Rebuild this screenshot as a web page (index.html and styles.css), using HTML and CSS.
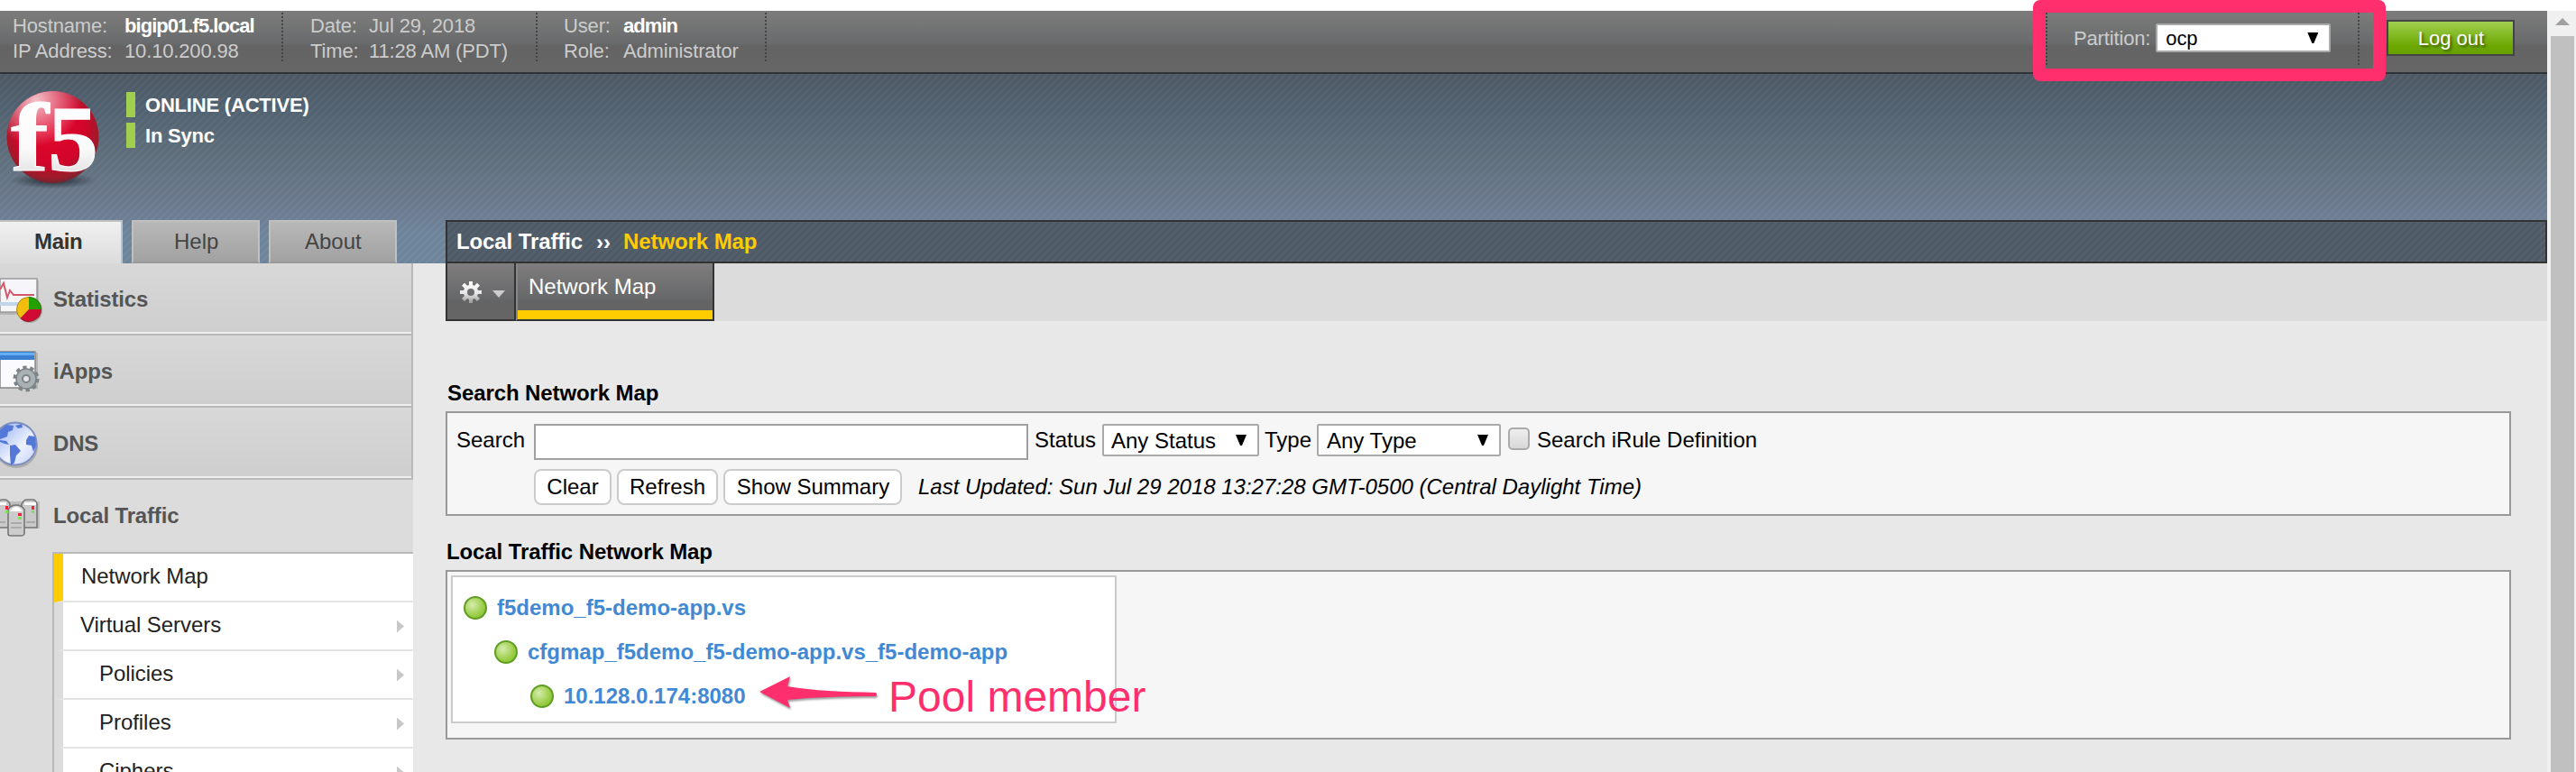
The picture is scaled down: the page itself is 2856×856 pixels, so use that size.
FILE: index.html
```html
<!DOCTYPE html>
<html lang="en">
<head>
<meta charset="utf-8">
<title>Network Map</title>
<link rel="stylesheet" href="styles.css">
</head>
<body>
<div class="screen">
  <div class="page">
    <header class="topbar">
      <dl class="facts facts-host"><dt>Hostname:</dt><dd class="strong">bigip01.f5.local</dd><dt>IP Address:</dt><dd>10.10.200.98</dd></dl>
      <dl class="facts facts-date"><dt>Date:</dt><dd>Jul 29, 2018</dd><dt>Time:</dt><dd>11:28 AM (PDT)</dd></dl>
      <dl class="facts facts-user"><dt>User:</dt><dd class="strong">admin</dd><dt>Role:</dt><dd>Administrator</dd></dl>
      <div class="partition">
        <span>Partition:</span>
        <div class="select select-partition"><span>ocp</span><i class="caret"></i></div>
      </div>
      <div class="logout">Log out</div>
    </header>

    <div class="banner">
      <div class="identity">
        <svg class="logo" viewBox="0 0 112 116" width="112" height="116">
          <defs>
            <radialGradient id="ball" cx="48%" cy="42%" r="62%">
              <stop offset="0" stop-color="#e2062c"/><stop offset=".6" stop-color="#d2052a"/><stop offset=".85" stop-color="#9a1c2b"/><stop offset="1" stop-color="#5c2a30"/>
            </radialGradient>
            <radialGradient id="shine" cx="32%" cy="10%" r="50%">
              <stop offset="0" stop-color="#fff" stop-opacity=".75"/><stop offset="1" stop-color="#fff" stop-opacity="0"/>
            </radialGradient>
            <radialGradient id="shade"><stop offset="0" stop-color="#1c232b" stop-opacity=".9"/><stop offset="1" stop-color="#1c232b" stop-opacity="0"/></radialGradient>
            <linearGradient id="silver" x1="0" y1="0" x2="0" y2="1"><stop offset="0" stop-color="#fff"/><stop offset=".6" stop-color="#fafafa"/><stop offset="1" stop-color="#d4d4d6"/></linearGradient>
          </defs>
          <ellipse cx="59" cy="103" rx="48" ry="9" fill="url(#shade)"/>
          <circle cx="58.500" cy="55" r="51" fill="url(#ball)"/>
          <circle cx="58.500" cy="55" r="51" fill="url(#shine)"/>
          <text class="logo-f" x="12" y="92" textLength="42" lengthAdjust="spacingAndGlyphs">f</text>
          <text class="logo-5" x="53" y="92" textLength="56" lengthAdjust="spacingAndGlyphs">5</text>
        </svg>
        <div class="states"><div class="state">ONLINE (ACTIVE)</div><div class="state">In Sync</div></div>
      </div>
      <div class="banner-foot">
        <nav class="tabs"><div class="tab tab-on">Main</div><div class="tab tab-help">Help</div><div class="tab tab-about">About</div></nav>
        <div class="crumbs"><span>Local Traffic</span><span class="sep">››</span><span class="here">Network Map</span></div>
      </div>
    </div>

    <div class="columns">
      <aside class="sidebar">
        <div class="group">
          <svg class="group-icon" viewBox="0 1 50 76" width="50" height="76">
            <path d="M0 20h43v38H0z" fill="#999" opacity=".5"/><path d="M0 18h41v37H0z" fill="#f6f6fa" stroke="#999" stroke-width="1.500"/>
            <path d="M0 44h40v4H0z" fill="#c3d5ea"/>
            <path d="M0 30l4-7 4 16 3-8 4 5h23" fill="none" stroke="#d4586a" stroke-width="2"/>
            <circle cx="33" cy="53" r="14" fill="#777" opacity=".5"/>
            <path d="M32 52V38a14 14 0 0 0-9.500 24z" fill="#f2bd0c"/><path d="M32 52V38a14 14 0 0 1 14 14z" fill="#23a000"/><path d="M32 52h14a14 14 0 0 1-23.500 10z" fill="#d00a33"/>
            <circle cx="32" cy="52" r="13.500" fill="none" stroke="#3b3b1c" stroke-opacity=".4"/>
          </svg>
          <span>Statistics</span>
        </div>
        <div class="group">
          <svg class="group-icon" viewBox="0 1 50 76" width="50" height="76">
            <path d="M0 20h42v40H0z" fill="#999" opacity=".5"/><path d="M0 19h39v40H0z" fill="#fbfaff" stroke="#888" stroke-width="1.500"/>
            <path d="M0 19h38v9H0z" fill="#3c7ed0"/><path d="M0 20h38v3H0z" fill="#64aef5"/>
            <circle cx="29" cy="49" r="12.500" fill="none" stroke="#7c8488" stroke-width="4" stroke-dasharray="4.200 3.650"/>
            <circle cx="29" cy="49" r="11" fill="#a9b1b5" stroke="#7c8488" stroke-width="1.500"/>
            <circle cx="29" cy="49" r="4" fill="#e4e4e8" stroke="#7c8488" stroke-width="2"/>
          </svg>
          <span>iApps</span>
        </div>
        <div class="group">
          <svg class="group-icon" viewBox="0 0 50 76" width="50" height="76">
            <defs><linearGradient id="sea" x1="0" y1="0" x2="1" y2="1"><stop offset="0" stop-color="#8ba7ee"/><stop offset=".6" stop-color="#eef2ff"/><stop offset="1" stop-color="#c3cffa"/></linearGradient></defs>
            <circle cx="18" cy="43" r="24" fill="#777" opacity=".4"/>
            <circle cx="17" cy="40" r="23.500" fill="url(#sea)" stroke="#7d8fc0" stroke-width="2"/>
            <path d="M0 25l7-6 8 1-1 5-5 2-1 5-8 3zM17 20l7-2 1 4-5 1zM0 36l7 1 3 4-5-1-5-2zM11 42l6-1 6 7-5 5-2 8-4 3-1-12zM29 36l3-5 7 1 1 10-3 7-2-7-6-1z" fill="#5478d8"/>
          </svg>
          <span>DNS</span>
        </div>
        <div class="group group-open">
          <svg class="group-icon" viewBox="0 2 50 76" width="50" height="76">
            <path d="M0 26h44v30H0z" fill="#888" opacity=".35"/>
            <path d="M-4 55V29q2-5 7-5h2q4 0 6 5v26zM24 55V29q2-5 6-5h6q4 0 5 5v26z" fill="#c9c9c9" stroke="#777" stroke-width="1.600"/>
            <path d="M9 62V35q3-5 9-5t9 5v27q-1 2-3 2H12q-3 0-3-2z" fill="#ccc" stroke="#777" stroke-width="1.600"/>
            <path d="M11 37q3-5 7-5t7 5zM27 27h13v3H27zM0 27h7v3H0z" fill="#fff"/>
            <path d="M12 50h12M12 55h12M29 49h10M0 49h6" stroke="#aaa" stroke-width="2"/>
            <path d="M6 31h3v4H6zM35 31h3v4h-3zM20 39h4v3h-4z" fill="#f0223a"/><path d="M6 36h3v3H6zM35 36h3v3h-3zM20 43h4v3h-4z" fill="#7be05a"/>
          </svg>
          <span>Local Traffic</span>
        </div>
        <ul class="menu">
          <li class="item item-on">Network Map</li>
          <li class="item more item-virtual">Virtual Servers</li>
          <li class="item more item-sub">Policies</li>
          <li class="item more item-sub">Profiles</li>
          <li class="item more item-sub">Ciphers</li>
        </ul>
      </aside>

      <main class="main">
        <div class="subtabs">
          <div class="gear">
            <svg viewBox="0 0 26 26" width="26" height="26">
              <defs><linearGradient id="metal" x1="0" y1="0" x2="0" y2="1"><stop offset="0" stop-color="#fff"/><stop offset=".55" stop-color="#e6e6e6"/><stop offset="1" stop-color="#999"/></linearGradient></defs>
              <path d="M11 1h4v4l2 .8 3-3 3 3-3 3L21 11h4v4h-4l-1 2 3 3-3 3-3-3-2 1v4h-4v-4l-2-1-3 3-3-3 3-3-1-2H1v-4h4l1-2.200-3-3 3-3 3 3 2-.8zM13 9a4 4 0 1 0 0 8 4 4 0 0 0 0-8z" fill="url(#metal)" fill-rule="evenodd"/>
            </svg>
            <i class="gear-caret"></i>
          </div>
          <div class="subtab">Network Map</div>
        </div>

        <h2 class="title">Search Network Map</h2>
        <section class="panel search">
          <div class="row">
            <span class="label-search">Search</span><div class="field"></div>
            <span class="label-status">Status</span><div class="select select-status"><span>Any Status</span><i class="caret"></i></div>
            <span class="label-type">Type</span><div class="select select-type"><span>Any Type</span><i class="caret"></i></div>
            <i class="check"></i><span class="label-irule">Search iRule Definition</span>
          </div>
          <div class="row row-buttons">
            <div class="btn btn-clear">Clear</div><div class="btn btn-refresh">Refresh</div><div class="btn btn-show">Show Summary</div>
            <em class="updated">Last Updated: Sun Jul 29 2018 13:27:28 GMT-0500 (Central Daylight Time)</em>
          </div>
        </section>

        <h2 class="title title-map">Local Traffic Network Map</h2>
        <section class="panel map">
          <div class="tree">
            <div class="node node-vs"><i class="dot"></i>f5demo_f5-demo-app.vs</div>
            <div class="node node-pool"><i class="dot"></i>cfgmap_f5demo_f5-demo-app.vs_f5-demo-app</div>
            <div class="node node-member"><i class="dot"></i>10.128.0.174:8080</div>
          </div>
        </section>
      </main>
    </div>
  </div>

  <div class="scrollbar"><i class="scroll-up"></i><div class="thumb"></div></div>

  <div class="mark-box"></div>
  <svg class="mark-arrow" viewBox="0 0 140 44" width="140" height="44"><path d="M2 21L36 4l-3 11c30 5 60 6 98 7q2 2 0 4c-38 0-68 1-98 4l3 9z"/></svg>
  <div class="mark-note">Pool member</div>
</div>
</body>
</html>
```
FILE: styles.css
```css
* { box-sizing: border-box; }
body { margin: 0; background: #fff; font-family: "Liberation Sans", Arial, sans-serif; font-size: 24px; color: #000; }
.screen { position: relative; width: 2856px; height: 856px; padding-top: 12px; overflow: hidden; display: flex; }
.page { width: 2824px; height: 844px; background: #e8e8e8; overflow: hidden; white-space: nowrap; }

.topbar { height: 70px; display: flex; padding-top: 2px; font-size: 22px; line-height: 29px; color: #ccc; border-bottom: 2px solid #2d343a; background: linear-gradient(#7d7c7c, #696b6c 52%, #646464 58%, #666); }
.facts { margin: 0; height: 56px; display: grid; grid-auto-rows: 28px; background: repeating-linear-gradient(#444 0 2px, transparent 2px 4px) right top / 2px 100% no-repeat; letter-spacing: -.15px; }
.facts dd { margin: 0; }
.facts-host { width: 314px; padding-left: 14px; grid-template-columns: 124px 1fr; }
.facts-date { width: 282px; padding-left: 30px; grid-template-columns: 65px 1fr; }
.facts-user { width: 254px; padding-left: 29px; grid-template-columns: 66px 1fr; }
.strong { color: #fff; font-weight: bold; letter-spacing: -.95px; }
.partition { width: 348px; height: 58px; margin-left: 1418px; padding: 12px 0 0 31px; display: flex; line-height: 33px; letter-spacing: -.15px; background: repeating-linear-gradient(#444 0 2px, transparent 2px 4px) left top / 2px 100% no-repeat, repeating-linear-gradient(#444 0 2px, transparent 2px 4px) right top / 2px 100% no-repeat; }
.select { background: #fff; border: 2px solid #a9a9a9; border-radius: 2px; color: #000; display: flex; justify-content: space-between; align-items: center; }
.select-partition { width: 194px; height: 32px; margin-left: 6px; padding: 0 12px 0 9px; }
.caret { width: 12px; height: 12px; background: #000; clip-path: polygon(0 0, 100% 0, 58% 100%, 42% 100%); }
.logout { width: 142px; height: 40px; margin: 8px 0 0 30px; border: 2px solid #444; padding-left: 1px; background: linear-gradient(#a0cf50, #6ca800 75%, #67a000); color: #fff; text-align: center; line-height: 37px; text-shadow: 2px 2px 3px rgba(0,0,0,.5); }

.banner { height: 210px; display: flex; flex-direction: column; justify-content: space-between; background: repeating-linear-gradient(135deg, rgba(255,255,255,.04) 0 2.4px, transparent 2.4px 5.657px), linear-gradient(#4d5964, #516170 18%, #5f6f7c 45%, #6d7b90 72%, #6d859b 85%, #6e859b); }
.identity { display: flex; padding-top: 15px; }
.logo { display: block; overflow: visible; }
.logo-f, .logo-5 { font-family: "Liberation Serif", "Times New Roman", serif; font-weight: bold; fill: url(#silver); stroke: #fff; stroke-width: 1px; }
.logo-f { font-size: 107px; }
.logo-5 { font-size: 104px; }
.states { margin-left: 28px; padding-top: 5px; display: flex; flex-direction: column; gap: 6px; }
.state { height: 28px; border-left: 10px solid #a0ce4e; padding-left: 11px; font-size: 22px; font-weight: bold; line-height: 30px; color: #fff; letter-spacing: -.2px; }
.banner-foot { display: flex; height: 48px; }
.tabs { display: flex; gap: 10px; width: 494px; }
.tab { width: 142px; border: 2px solid #c0c0c0; border-bottom-color: #999; background: linear-gradient(#b8b8b8, #a2a2a2); color: #444; line-height: 43px; padding-left: 45px; }
.tab-on { width: 136px; padding-left: 38px; border-left: 0; border-bottom: 0; border-right-color: #b9c3cd; background: linear-gradient(#f0f0f0, #dcdcdc); font-weight: bold; color: #333; letter-spacing: -.3px; }
.tab-about { padding-left: 38px; }
.crumbs { flex: 1; display: flex; border: 2px solid #333; padding-left: 10px; line-height: 43px; font-weight: bold; color: #fff; background: repeating-linear-gradient(135deg, rgba(255,255,255,.03) 0 2.4px, transparent 2.4px 5.657px), #4f5b67; letter-spacing: -.1px; }
.sep { width: 30px; margin-left: 15px; line-height: 45px; }
.here { color: #fc0; }

.columns { display: flex; height: 564px; }
.sidebar { width: 458px; background: #dcdcdc; }
.group { height: 80px; display: flex; line-height: 79px; font-weight: bold; color: #555; border-right: 2px solid #b9b9b9; border-bottom: 2px solid #b9b9b9; background: linear-gradient(#d8d8d8, #cecece 76px, #efefef 76px); letter-spacing: -.15px; }
.group-open { border-color: transparent; background: none; }
.group-icon { width: 50px; margin-right: 9px; display: block; }
.menu { list-style: none; margin: 0 0 0 58px; padding: 0; border: 2px solid #b9b9b9; border-right: 0; }
.item { height: 54px; background: #fff; border-left: 10px solid #dcdcdc; border-bottom: 2px solid #e4e4e4; padding: 0 10px 2px 20px; line-height: 50px; color: #222; display: flex; justify-content: space-between; align-items: center; letter-spacing: -.05px; }
.item-on { border-left-color: #fc0; }
.item-virtual { padding-left: 19px; }
.item-sub { padding-left: 40px; }
.more::after { content: ""; width: 8px; height: 14px; margin-top: 3px; background: #c8c8c8; clip-path: polygon(0 0, 100% 50%, 0 100%); }

.main { width: 2330px; margin-left: 36px; }
.subtabs { height: 64px; display: flex; background: #dcdcdc; color: #fff; }
.gear, .subtab { border: 2px solid #333; border-top: 0; background: linear-gradient(#7f7d7e, #68696b 60%, #646464 70%, #666); }
.gear { width: 78px; display: flex; padding: 19px 0 0 13px; gap: 11px; }
.gear-caret { width: 14px; height: 8px; margin-top: 11px; background: #ccc; clip-path: polygon(0 0, 100% 0, 50% 100%); }
.subtab { width: 220px; border-left: 2px solid #888; padding-left: 12px; line-height: 51px; box-shadow: inset 0 -10px #fc0; }
.title { margin: 60px 0 0 2px; height: 40px; font-size: 24px; line-height: 40px; letter-spacing: -.1px; }
.panel { width: 2290px; border: 2px solid #999; background: #f6f6f6; }
.search { height: 116px; padding: 12px 0 0 10px; }
.row { display: flex; height: 50px; line-height: 35px; }
.label-search { width: 86px; }
.field { width: 548px; height: 40px; border: 2px solid #a0a0a0; background: #fff; }
.label-status { width: 75px; margin-left: 7px; }
.select-status { width: 174px; height: 36px; padding: 0 12px 0 8px; }
.label-type { width: 58px; margin-left: 6px; }
.select-type { width: 204px; height: 36px; padding: 0 12px 0 9px; }
.check { width: 24px; height: 25px; margin: 4px 8px 0; border: 2px solid #aaa; border-radius: 5px; background: linear-gradient(#eee, #d8d8d8); }
.row-buttons { padding-left: 86px; gap: 6px; }
.btn { height: 40px; border: 2px solid #ccc; border-radius: 8px; background: #fff; text-align: center; line-height: 35px; }
.btn-clear { width: 86px; }
.btn-refresh { width: 112px; }
.btn-show { width: 198px; padding-left: 1px; }
.updated { margin-left: 12px; line-height: 39px; }
.title-map { margin: 20px 0 0 1px; height: 40px; line-height: 39px; }
.map { height: 188px; padding: 4px; }
.tree { width: 738px; height: 164px; border: 2px solid #ccc; background: #fff; color: #4189d3; font-weight: bold; }
.node { display: flex; align-items: center; gap: 11px; height: 50px; }
.node-vs { height: 48px; margin-top: 10px; padding-left: 12px; }
.node-pool { padding-left: 46px; }
.node-member { padding-left: 86px; height: 48px; }
.dot { width: 26px; height: 26px; border-radius: 50%; border: 2px solid #5f9e22; background: radial-gradient(circle at 35% 35%, #d6ecae, #9fd04e 55%, #7bbb1a); }

.scrollbar { width: 32px; height: 844px; background: #f0f0f0; padding: 8px 2px 0 4px; }
.scroll-up { display: block; width: 16px; height: 8px; margin-left: 5px; background: #a0a0a0; clip-path: polygon(50% 0, 100% 100%, 0 100%); }
.thumb { height: 816px; margin-top: 12px; background: #c0c0c0; }

.mark-box { position: absolute; left: 2254px; top: 0; width: 391px; height: 90px; border: 14px solid #ff2f6e; border-radius: 8px; }
.mark-arrow { position: absolute; left: 840px; top: 746px; fill: #ff2f6e; filter: drop-shadow(1px 2px 1px rgba(0,0,0,.4)); }
.mark-note { position: absolute; left: 985px; top: 746px; font-size: 48px; line-height: 54px; color: #ff2f6e; }
```
